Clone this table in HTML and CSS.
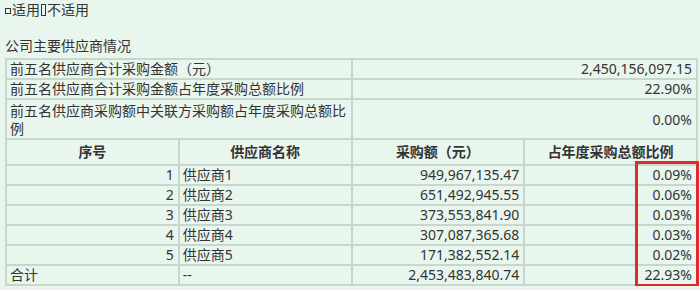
FILE: index.html
```
<!DOCTYPE html>
<html lang="zh">
<head>
<meta charset="utf-8">
<link rel="stylesheet" href="styles.css">
</head>
<body>
<div class="opt"><span class="box1"></span>适用<span class="box2"></span>不适用</div>
<div class="title">公司主要供应商情况</div>
<div class="wrap">
<table class="tbl">
<colgroup><col class="c"><col class="c"><col class="c"><col class="c"></colgroup>
<tr><td colspan="2">前五名供应商合计采购金额（元）</td><td colspan="2" class="r">2,450,156,097.15</td></tr>
<tr><td colspan="2">前五名供应商合计采购金额占年度采购总额比例</td><td colspan="2" class="r">22.90%</td></tr>
<tr class="tall"><td colspan="2">前五名供应商采购额中关联方采购额占年度采购总额比例</td><td colspan="2" class="r">0.00%</td></tr>
<tr class="head"><th>序号</th><th>供应商名称</th><th>采购额（元）</th><th>占年度采购总额比例</th></tr>
<tr><td class="r">1</td><td>供应商1</td><td class="r">949,967,135.47</td><td class="r">0.09%</td></tr>
<tr><td class="r">2</td><td>供应商2</td><td class="r">651,492,945.55</td><td class="r">0.06%</td></tr>
<tr><td class="r">3</td><td>供应商3</td><td class="r">373,553,841.90</td><td class="r">0.03%</td></tr>
<tr><td class="r">4</td><td>供应商4</td><td class="r">307,087,365.68</td><td class="r">0.03%</td></tr>
<tr><td class="r">5</td><td>供应商5</td><td class="r">171,382,552.14</td><td class="r">0.02%</td></tr>
<tr><td>合计</td><td>--</td><td class="r">2,453,483,840.74</td><td class="r">22.93%</td></tr>
</table>
<div class="mark"></div>
</div>
</body>
</html>
```
FILE: styles.css
```
html, body {
  margin: 0;
  padding: 0;
  background: #e9f6ee;
}
body {
  padding: 0 0 0 5px;
  font-family: "Noto Sans", "Noto Sans CJK SC", sans-serif;
  font-size: 14px;
  color: #333;
}
.opt {
  line-height: 20px;
  font-size: 14px;
}
.box1 {
  display: inline-block;
  width: 4px;
  height: 4px;
  border: 1px solid #333;
  margin-right: 1px;
  vertical-align: 1px;
}
.box2 {
  display: inline-block;
  width: 3px;
  height: 10px;
  border: 1px solid #333;
  margin: 0 1px;
  vertical-align: -1px;
}
.title {
  line-height: 20px;
  margin-top: 16px;
}
.wrap {
  position: relative;
  width: 693px;
  margin-top: 2px;
}
.tbl {
  width: 693px;
  border-collapse: collapse;
  table-layout: fixed;
}
.c { width: 25%; }
.tbl td, .tbl th {
  border: 2px solid #c6d7cb;
  padding: 0 3px;
  line-height: 18px;
  height: 18px;
  word-break: break-all;
  vertical-align: middle;
}
.tbl td.r { text-align: right; padding-right: 4px; }
.tall td { padding-top: 1px; height: 37px; }
.head th {
  height: 24px;
  line-height: 24px;
  font-weight: bold;
  text-align: center;
}
.mark {
  position: absolute;
  left: 630px;
  top: 103px;
  width: 58px;
  height: 120px;
  border: 3px solid #e02b2b;
}
```
